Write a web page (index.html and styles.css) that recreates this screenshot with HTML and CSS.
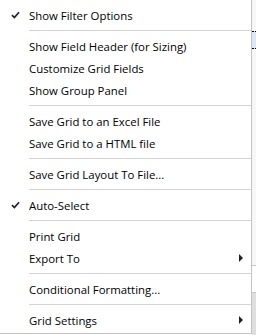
FILE: index.html
```html
<!DOCTYPE html>
<html lang="en">
<head>
  <meta charset="UTF-8">
  <title>Grid Menu</title>
  <link rel="stylesheet" href="styles.css">
</head>
<body>
  <div class="screen">
    <div class="menu">
      <div class="item checked">
        <span class="check"><svg width="9" height="8" viewBox="0 0 9 8"><path d="M1 4.2 L3.4 6.6 L8 1.2" fill="none" stroke="#222" stroke-width="1.7"/></svg></span>
        <span class="label">Show Filter Options</span>
      </div>
      <div class="sep"></div>
      <div class="item"><span class="check"></span><span class="label">Show Field Header (for Sizing)</span></div>
      <div class="item"><span class="check"></span><span class="label">Customize Grid Fields</span></div>
      <div class="item"><span class="check"></span><span class="label">Show Group Panel</span></div>
      <div class="sep"></div>
      <div class="item"><span class="check"></span><span class="label">Save Grid to an Excel File</span></div>
      <div class="item"><span class="check"></span><span class="label">Save Grid to a HTML file</span></div>
      <div class="sep"></div>
      <div class="item"><span class="check"></span><span class="label">Save Grid Layout To File...</span></div>
      <div class="sep"></div>
      <div class="item checked">
        <span class="check"><svg width="9" height="8" viewBox="0 0 9 8"><path d="M1 4.2 L3.4 6.6 L8 1.2" fill="none" stroke="#222" stroke-width="1.7"/></svg></span>
        <span class="label">Auto-Select</span>
      </div>
      <div class="sep"></div>
      <div class="item"><span class="check"></span><span class="label">Print Grid</span></div>
      <div class="item"><span class="check"></span><span class="label">Export To</span><span class="arrow"></span></div>
      <div class="sep"></div>
      <div class="item"><span class="check"></span><span class="label">Conditional Formatting...</span></div>
      <div class="sep"></div>
      <div class="item"><span class="check"></span><span class="label">Grid Settings</span><span class="arrow"></span></div>
    </div>
    <div class="behind">
      <div class="b-top"></div>
      <div class="b-row"></div>
      <div class="b-mid"></div>
      <div class="b-line"></div>
      <div class="b-cell"></div>
      <div class="b-line"></div>
      <div class="b-grey"></div>
    </div>
  </div>
</body>
</html>
```

FILE: styles.css
```css
body {
  margin: 0;
  background: #ffffff;
  font-family: "Open Sans", "Noto Sans", sans-serif;
  font-size: 11.4px;
  color: #000;
}

.screen {
  display: flex;
  width: 256px;
  height: 335px;
  overflow: hidden;
}

.menu {
  width: 251px;
  align-self: flex-start;
  padding: 4px 0 2px;
  background: #ffffff;
  border-right: 1px solid #c4c4c4;
  border-bottom: 1px solid #c4c4c4;
  flex-shrink: 0;
}

.item {
  display: flex;
  align-items: center;
  height: 22px;
}

.check {
  width: 29px;
  display: flex;
  justify-content: center;
  padding-left: 1px;
  box-sizing: border-box;
}

.label {
  flex: 1;
  white-space: nowrap;
}

.arrow {
  width: 0;
  height: 0;
  border-top: 4px solid transparent;
  border-bottom: 4px solid transparent;
  border-left: 4px solid #222;
  margin-right: 8px;
}

.sep {
  height: 9px;
  display: flex;
  align-items: center;
  padding-left: 29px;
}

.sep::after {
  content: "";
  flex: 1;
  height: 1px;
  background: #d4d4d4;
}

.behind {
  flex: 1;
  display: flex;
  flex-direction: column;
  background: #f7f7f7;
}

.b-top {
  height: 31px;
}

.b-row {
  height: 16px;
  background: #dce6f4;
  border-top: 1px dotted #000;
  border-bottom: 1px dotted #000;
}

.b-mid {
  height: 216px;
}

.b-line {
  height: 1px;
  background: #c8c8c8;
}

.b-cell {
  height: 26px;
  background: #ffffff;
}

.b-grey {
  flex: 1;
  background: #dedede;
}
```
